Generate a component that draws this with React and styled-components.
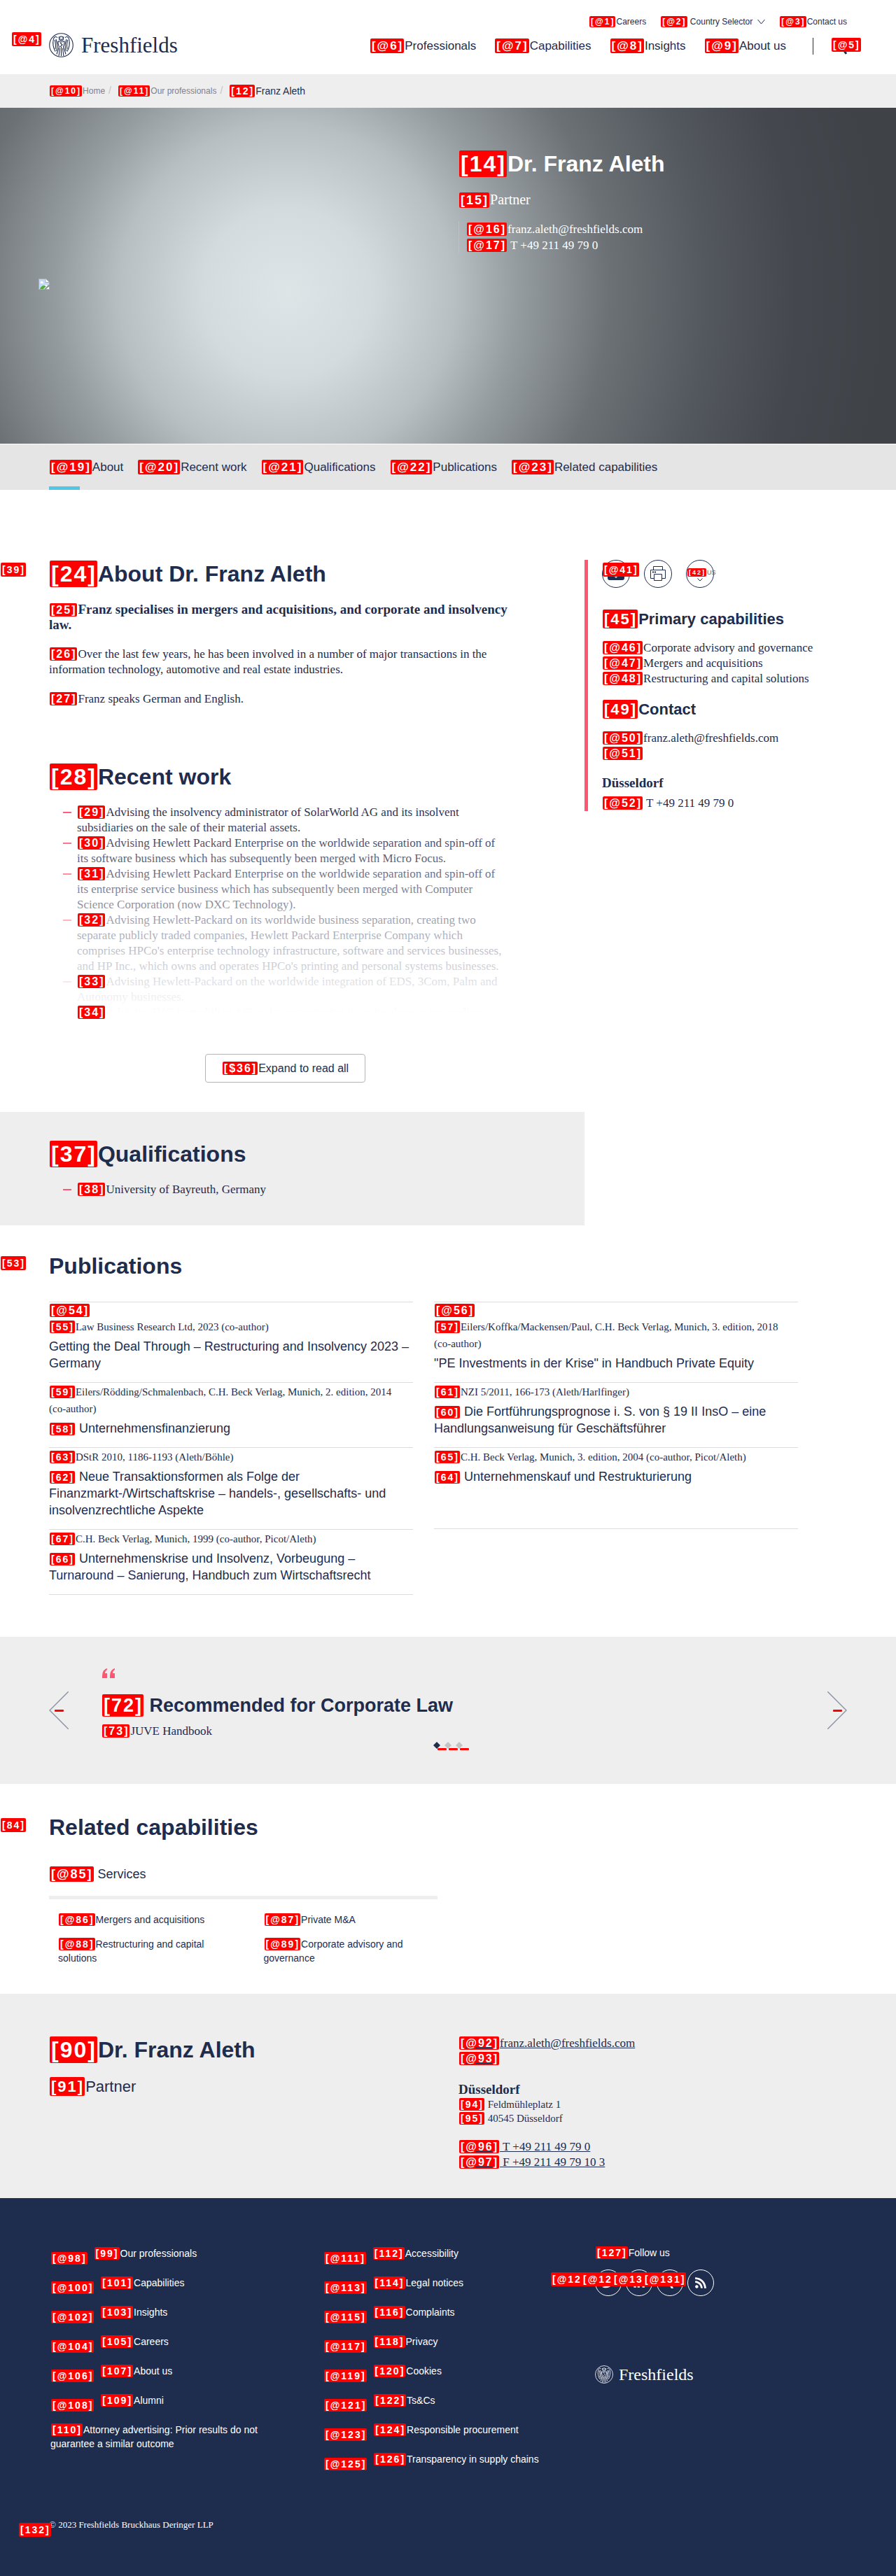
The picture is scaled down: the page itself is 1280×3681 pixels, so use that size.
import React from "react";
import styled, { createGlobalStyle } from "styled-components";
import { FaTwitter, FaLinkedinIn, FaXing, FaRss } from "react-icons/fa";

const navy = "#1e2c4d";
const pink = "#ff5773";
const pale = "#eeeeee";
const sans = `"Helvetica Neue", "Liberation Sans", Arial, sans-serif`;
const serif = `"Liberation Serif", "Times New Roman", serif`;

const GlobalStyle = createGlobalStyle`
  *, *::before, *::after { box-sizing: border-box; }
  body { margin: 0; background: #fff; color: ${navy}; font-family: ${sans}; font-size: 16px; }
  h1, h2, h3, p, ul { margin: 0; padding: 0; }
  ul { list-style: none; }
  a { color: inherit; text-decoration: none; }
  button { font: inherit; color: inherit; background: none; border: 0; padding: 0; cursor: pointer; }
`;

const Tag = styled.span`
  position: relative;
  z-index: 2;
  margin: 0 1px;
  padding: 1px 1px 1px 2px;
  border-radius: 2px;
  background: #ff0000;
  color: #fff;
  font-family: ${sans};
  font-weight: 700;
  font-size: ${(p) => p.$s || 16}px;
  line-height: 1;
  letter-spacing: 2px;
  white-space: nowrap;
`;

const FloatTag = styled(Tag)`
  position: absolute;
  left: ${(p) => p.$x}px;
  top: ${(p) => p.$y}px;
  margin: 0;
  line-height: 18px;
`;

const RedDash = styled.span`
  position: absolute;
  left: ${(p) => p.$x}px;
  top: ${(p) => p.$y}px;
  width: 13px;
  height: 3px;
  border-radius: 1px;
  background: #ff0000;
`;

/* ---------- header ---------- */
const Header = styled.header`
  display: flex;
  justify-content: space-between;
  padding: 22px 70px 24px;
`;
const LogoLink = styled.a`
  position: relative;
  display: flex;
  align-items: center;
  gap: ${(p) => (p.$small ? 8 : 11)}px;
  margin-top: ${(p) => (p.$small ? 99 : 24)}px;
  height: ${(p) => (p.$small ? 26 : 36)}px;
  font-family: ${serif};
  font-size: ${(p) => (p.$small ? 24 : 31)}px;
  line-height: 1;
`;
const HeaderRight = styled.div`
  display: flex;
  flex-direction: column;
  align-items: flex-end;
  gap: 14px;
`;
const TopLinks = styled.nav`
  display: flex;
  gap: 20px;
  font-size: 12px;
  line-height: 18px;
`;
const Chevron = styled.svg`
  margin-left: 7px;
`;
const MainNav = styled.nav`
  display: flex;
  align-items: center;
  gap: 26px;
  font-size: 17px;
  line-height: 22px;
`;
const SearchButton = styled.button`
  position: relative;
  display: flex;
  height: 24px;
  margin-left: 12px;
  padding-left: 26px;
  border-left: 1px solid ${navy};
`;

const Crumbs = styled.nav`
  display: flex;
  align-items: center;
  padding: 0 70px;
  background: ${pale};
  font-size: 12px;
  line-height: 47px;
`;
const CrumbLink = styled.a`
  color: #7b8290;
  &::after {
    content: "/";
    margin: 0 9px 0 5px;
    color: #c4c4c8;
    font-size: 14px;
  }
`;
const CrumbHere = styled.span`
  font-size: 14px;
`;

/* ---------- hero ---------- */
const Hero = styled.section`
  display: grid;
  grid-template-columns: 600px 1fr;
  min-height: 480px;
  padding-left: 55px;
  color: #fff;
  background: radial-gradient(
    circle at 410px 55%,
    #dde5e7 0,
    #d3dbde 120px,
    #b7bfc2 240px,
    #959c9f 330px,
    #7f8588 400px,
    #6c7176 460px,
    #53585e 600px,
    #44484e 730px,
    #3f4348 860px
  );
`;
const Portrait = styled.div`
  padding-top: 244px;
`;
const HeroText = styled.div`
  padding-top: 60px;
`;
const HeroRole = styled.p`
  margin: 17px 0;
  font-family: ${serif};
  font-size: 20px;
  line-height: 28px;
`;
const HeroContact = styled.ul`
  padding-left: 10px;
  border-left: 1px solid #f5c518;
  font-family: ${serif};
  font-size: 17px;
  line-height: 23px;
`;

const Tabs = styled.nav`
  display: flex;
  gap: 20px;
  margin-top: 1px;
  padding: 0 70px;
  background: #e5e5e5;
  font-size: 17px;
  line-height: 65px;
`;
const Tab = styled.a`
  position: relative;
  ${(p) =>
    p.$active &&
    `&::after {
      content: "";
      position: absolute;
      left: 0;
      bottom: 0;
      width: 44px;
      height: 5px;
      background: #53c6e6;
    }`}
`;

/* ---------- shared text ---------- */
const H2 = styled.h2`
  font-size: 32px;
  line-height: 40px;
`;
const Copy = styled.p`
  margin-top: 20px;
  font-family: ${serif};
  font-size: ${(p) => (p.$strong ? 19 : 17)}px;
  font-weight: ${(p) => (p.$strong ? 700 : 400)};
  line-height: 22px;
`;
const DashList = styled.ul`
  position: relative;
  margin-top: 20px;
  padding-left: 40px;
  font-family: ${serif};
  font-size: 17px;
  line-height: 22px;
  ${(p) =>
    p.$fade &&
    `&::after {
      content: "";
      position: absolute;
      z-index: 1;
      inset: 0;
      background: linear-gradient(rgba(255,255,255,0) 0, #fff 298px);
    }`}
`;
const DashItem = styled.li`
  position: relative;
  &::before {
    content: "";
    position: absolute;
    left: -20px;
    top: 10px;
    width: 12px;
    height: 2px;
    background: ${pink};
  }
`;

/* ---------- main ---------- */
const Main = styled.div`
  position: relative;
  display: grid;
  grid-template-columns: 835px 1fr;
  align-items: start;
  padding-top: 100px;
`;
const Block = styled.section`
  padding: 0 90px ${(p) => p.$bottom}px 70px;
`;
const Qualifications = styled.section`
  padding: 40px 90px 40px 70px;
  background: ${pale};
`;
const ExpandButton = styled.button`
  display: block;
  height: 41px;
  margin: 48px auto 0;
  padding: 0 23px;
  border: 1px solid #b5b5b5;
  border-radius: 4px;
  line-height: 38px;
`;
const Aside = styled.aside`
  padding-left: 20px;
  border-left: 5px solid ${pink};
  font-family: ${serif};
  font-size: 17px;
  line-height: 22px;
`;
const Tools = styled.div`
  display: flex;
  gap: 20px;
  margin-bottom: 31px;
`;
const ToolButton = styled.button`
  position: relative;
  display: flex;
  align-items: center;
  justify-content: center;
  width: 40px;
  height: 40px;
  border: 1px solid ${navy};
  border-radius: 50%;
`;
const LocaleText = styled.span`
  position: absolute;
  left: 0;
  top: 11px;
  color: #5d6780;
  font-family: ${sans};
  font-size: 9px;
  line-height: 12px;
  white-space: nowrap;
`;
const LocaleChevron = styled.svg`
  position: absolute;
  left: 15px;
  bottom: 8px;
`;
const H3 = styled.h3`
  margin-bottom: 16px;
  font-family: ${sans};
  font-size: 22px;
  line-height: 28px;
`;
const AsideList = styled.ul`
  margin-bottom: ${(p) => p.$gap}px;
`;
const Bold = styled.p`
  font-size: 19px;
  font-weight: 700;
  line-height: 22px;
`;
const AsidePhone = styled.a`
  display: block;
  margin-top: 7px;
`;

/* ---------- publications ---------- */
const Section = styled.section`
  position: relative;
  padding: ${(p) => p.$top}px 70px ${(p) => p.$bottom}px;
`;
const PubGrid = styled.div`
  display: grid;
  grid-template-columns: 1fr 1fr;
  column-gap: 30px;
  max-width: 1070px;
  margin-top: 31px;
`;
const Pub = styled.article`
  padding: 1px 0 15px;
  border-top: 1px solid #dcdcdf;
  ${(p) => p.$last && `border-bottom: 1px solid #dcdcdf;`}
`;
const PubLink = styled.a`
  display: block;
  line-height: 22px;
`;
const PubMeta = styled.p`
  font-family: ${serif};
  font-size: 15px;
  line-height: 24px;
`;
const PubTitle = styled.p`
  margin-top: 4px;
  font-size: 18px;
  line-height: 24px;
`;

/* ---------- quote ---------- */
const Quote = styled.section`
  display: flex;
  flex-direction: column;
  padding: 45px 70px 50px;
  background: ${pale};
`;
const QuoteRow = styled.div`
  display: flex;
  align-items: flex-start;
`;
const Arrow = styled.button`
  position: relative;
  width: 28px;
  height: 54px;
  margin-top: 33px;
`;
const QuoteBody = styled.blockquote`
  flex: 1;
  margin: 0 0 0 47px;
`;
const QuoteTitle = styled.h3`
  margin-top: 18px;
  font-size: 27px;
  line-height: 40px;
`;
const QuoteSource = styled.p`
  margin-top: 6px;
  font-family: ${serif};
  font-size: 17px;
  line-height: 22px;
`;
const Dots = styled.div`
  display: flex;
  justify-content: center;
  gap: 6px;
  margin-top: 4px;
`;
const Dot = styled.button`
  position: relative;
  width: 10px;
  height: 10px;
  display: flex;
`;

/* ---------- related ---------- */
const Services = styled.div`
  max-width: 555px;
  margin-top: 35px;
`;
const ServicesLink = styled.a`
  display: block;
  padding-bottom: 19px;
  border-bottom: 5px solid ${pale};
  font-size: 18px;
  line-height: 24px;
`;
const ServiceGrid = styled.ul`
  display: grid;
  grid-template-columns: 1fr 1fr;
  gap: 15px 45px;
  padding: 19px 0 0 13px;
  font-size: 14px;
  line-height: 20px;
`;

/* ---------- contact band ---------- */
const ContactBand = styled.section`
  display: grid;
  grid-template-columns: 585px 1fr;
  padding: 60px 70px 40px;
  background: ${pale};
`;
const BandRole = styled.p`
  margin-top: 19px;
  font-size: 22px;
  line-height: 28px;
`;
const BandDetails = styled.div`
  font-family: ${serif};
  font-size: 17px;
  line-height: 22px;
`;
const BandLink = styled.a`
  display: block;
  text-decoration: underline;
`;
const Address = styled.address`
  margin-bottom: 20px;
  font-style: normal;
  font-size: 15px;
  line-height: 20px;
`;
const City = styled(Bold)`
  margin-top: 22px;
`;

/* ---------- footer ---------- */
const Footer = styled.footer`
  position: relative;
  padding: 69px 70px 63px;
  background: ${navy};
  color: #fff;
  font-size: 14px;
`;
const FooterCols = styled.div`
  display: grid;
  grid-template-columns: 390px 390px 1fr;
`;
const FooterList = styled.ul`
  padding-left: 2px;
`;
const FooterItem = styled.li`
  height: 42px;
  line-height: 20px;
`;
const LowTag = styled(Tag)`
  top: 7px;
  margin-right: 9px;
`;
const Legal = styled.p`
  max-width: 330px;
  line-height: 20px;
`;
const FooterFollow = styled.div`
  line-height: 18px;
`;
const Social = styled.div`
  display: flex;
  gap: 6px;
  margin-top: 15px;
`;
const SocialLink = styled.a`
  position: relative;
  display: flex;
  align-items: center;
  justify-content: center;
  width: 38px;
  height: 38px;
  border: 1px solid #fff;
  border-radius: 50%;
  font-size: 18px;
`;
const Copyright = styled.p`
  position: relative;
  margin-top: 52px;
  font-family: ${serif};
  font-size: 13px;
  line-height: 20px;
`;

function Emblem({ size, bg }) {
  return (
    <svg width={size} height={size} viewBox="0 0 35 35" fill="none" stroke="currentColor" strokeWidth="1.1" aria-hidden="true">
      <circle cx="17.5" cy="17.5" r="16.8" />
      <path d="M12 7c-2-2.600-5-1.500-5.600 2C5 15 6 21 9 26.500M23 7c2-2.600 5-1.500 5.600 2C30 15 29 21 26 26.500" />
      <path d="M10 9c2 6 2.500 12 .5 17M8.300 10c1.300 5 1.600 9 .7 13M25 9c-2 6-2.500 12-.5 17M26.700 10c-1.300 5-1.600 9-.7 13" />
      <circle cx="17.500" cy="8" r="3" fill={bg} />
      <path d="M14 5.500l1 3M21 5.500l-1 3M16.300 7.500h.6M18.300 7.500h.6M16.500 9.500h2" />
      <path d="M13 11.500c1.500 2 7.500 2 9 0M13 12c-.5 4 .8 6 1.500 8-1.500 4-2.500 7-3.500 10.500M22 12c.5 4-.8 6-1.500 8 1.500 4 2.500 7 3.500 10.500" />
      <path d="M16 14l3 3-3 3M17.500 20v13M15.500 22c-.5 4-.8 7-1.500 11M19.500 22c.5 4 .8 7 1.500 11" />
    </svg>
  );
}

const tabs = [
  ["19", "About"],
  ["20", "Recent work"],
  ["21", "Qualifications"],
  ["22", "Publications"],
  ["23", "Related capabilities"],
];

const work = [
  ["29", "Advising the insolvency administrator of SolarWorld AG and its insolvent", "subsidiaries on the sale of their material assets."],
  ["30", "Advising Hewlett Packard Enterprise on the worldwide separation and spin-off of", "its software business which has subsequently been merged with Micro Focus."],
  ["31", "Advising Hewlett Packard Enterprise on the worldwide separation and spin-off of", "its enterprise service business which has subsequently been merged with Computer", "Science Corporation (now DXC Technology)."],
  ["32", "Advising Hewlett-Packard on its worldwide business separation, creating two", "separate publicly traded companies, Hewlett Packard Enterprise Company which", "comprises HPCo's enterprise technology infrastructure, software and services businesses,", "and HP Inc., which owns and operates HPCo's printing and personal systems businesses."],
  ["33", "Advising Hewlett-Packard on the worldwide integration of EDS, 3Com, Palm and", "Autonomy businesses."],
  ["34", "Advising IVG Immobilien AG on its restructuring in an insolvency proceeding"],
];

const pubs = [
  { link: "54", m: "55", meta: "Law Business Research Ltd, 2023 (co-author)", title: "Getting the Deal Through – Restructuring and Insolvency 2023 – Germany" },
  { link: "56", m: "57", meta: ["Eilers/Koffka/Mackensen/Paul, C.H. Beck Verlag, Munich, 3. edition, 2018", "(co-author)"], title: "\"PE Investments in der Krise\" in Handbuch Private Equity" },
  { m: "59", meta: ["Eilers/Rödding/Schmalenbach, C.H. Beck Verlag, Munich, 2. edition, 2014", "(co-author)"], t: "58", title: "Unternehmensfinanzierung" },
  { m: "61", meta: "NZI 5/2011, 166-173 (Aleth/Harlfinger)", t: "60", title: "Die Fortführungsprognose i. S. von § 19 II InsO – eine Handlungsanweisung für Geschäftsführer" },
  { m: "63", meta: "DStR 2010, 1186-1193 (Aleth/Böhle)", t: "62", title: "Neue Transaktionsformen als Folge der Finanzmarkt-/Wirtschaftskrise – handels-, gesellschafts- und insolvenzrechtliche Aspekte" },
  { m: "65", meta: "C.H. Beck Verlag, Munich, 3. edition, 2004 (co-author, Picot/Aleth)", t: "64", title: "Unternehmenskauf und Restrukturierung", last: true },
  { m: "67", meta: "C.H. Beck Verlag, Munich, 1999 (co-author, Picot/Aleth)", t: "66", title: "Unternehmenskrise und Insolvenz, Vorbeugung – Turnaround – Sanierung, Handbuch zum Wirtschaftsrecht", last: true },
];

const services = [
  ["86", "Mergers and acquisitions"],
  ["87", "Private M&A"],
  ["88", "Restructuring and capital solutions"],
  ["89", "Corporate advisory and governance"],
];

const footerA = [
  ["98", "99", "Our professionals"],
  ["100", "101", "Capabilities"],
  ["102", "103", "Insights"],
  ["104", "105", "Careers"],
  ["106", "107", "About us"],
  ["108", "109", "Alumni"],
];
const footerB = [
  ["111", "112", "Accessibility"],
  ["113", "114", "Legal notices"],
  ["115", "116", "Complaints"],
  ["117", "118", "Privacy"],
  ["119", "120", "Cookies"],
  ["121", "122", "Ts&Cs"],
  ["123", "124", "Responsible procurement"],
  ["125", "126", "Transparency in supply chains"],
];
const social = [
  ["128", "Twitter", FaTwitter],
  ["129", "LinkedIn", FaLinkedinIn],
  ["130", "Xing", FaXing],
  ["131", "RSS", FaRss],
];

function Lines({ of }) {
  return [].concat(of).map((line, i) => (
    <React.Fragment key={i}>
      {i > 0 && <br />}
      {line}
    </React.Fragment>
  ));
}

function FooterLinks({ items }) {
  return items.map(([a, b, label]) => (
    <FooterItem key={a}>
      <a href="#">
        <LowTag $s={14}>[@{a}]</LowTag>
        <Tag $s={14}>[{b}]</Tag>
        {label}
      </a>
    </FooterItem>
  ));
}

export default function App() {
  return (
    <>
      <GlobalStyle />
      <Header>
        <LogoLink href="#">
          <FloatTag $s={14} $x={-53} $y={0}>[@4]</FloatTag>
          <Emblem size={35} bg="#fff" />
          Freshfields
        </LogoLink>
        <HeaderRight>
          <TopLinks>
            <a href="#"><Tag $s={12}>[@1]</Tag>Careers</a>
            <a href="#">
              <Tag $s={12}>[@2]</Tag> Country Selector
              <Chevron width="11" height="8" viewBox="0 0 11 8" fill="none" stroke={navy}>
                <path d="M0.500 1l5 6 5-6" />
              </Chevron>
            </a>
            <a href="#"><Tag $s={12}>[@3]</Tag>Contact us</a>
          </TopLinks>
          <MainNav>
            <a href="#"><Tag $s={17}>[@6]</Tag>Professionals</a>
            <a href="#"><Tag $s={17}>[@7]</Tag>Capabilities</a>
            <a href="#"><Tag $s={17}>[@8]</Tag>Insights</a>
            <a href="#"><Tag $s={17}>[@9]</Tag>About us</a>
            <SearchButton aria-label="Search">
              <svg width="22" height="24" viewBox="0 0 22 24" fill="none" stroke={navy} strokeWidth="2">
                <circle cx="10" cy="10" r="9" />
                <path d="M16 16l5 7" strokeWidth="3" />
              </svg>
              <FloatTag $s={14} $x={26} $y={0}>[@5]</FloatTag>
            </SearchButton>
          </MainNav>
        </HeaderRight>
      </Header>

      <Crumbs>
        <CrumbLink href="#"><Tag $s={12}>[@10]</Tag>Home</CrumbLink>
        <CrumbLink href="#"><Tag $s={12}>[@11]</Tag>Our professionals</CrumbLink>
        <CrumbHere><Tag $s={14}>[12]</Tag>Franz Aleth</CrumbHere>
      </Crumbs>

      <Hero>
        <Portrait>
          <svg width="16" height="16" viewBox="0 0 16 16" role="img" aria-label="Portrait">
            <path d="M0.500 0.500h10l5 5v10h-15z" fill="#fff" stroke="#a9adb2" />
            <path d="M1 1h9v5h5v4L10 9 4 15H1z" fill="#c3d9f5" />
            <path d="M3 6a1.500 1.500 0 0 1 3-1 1.300 1.300 0 0 1 1 2H3z" fill="#fff" />
            <path d="M2 15c1-3 3-5 6-5l3 1-4 4zM12 11l3-2v3z" fill="#4fae3e" />
            <path d="M10 0.500v5h5.500" fill="#fff" stroke="#a9adb2" />
            <path d="M9 15.500l6.500-6" stroke="#8f9599" strokeWidth="2" />
          </svg>
        </Portrait>
        <HeroText>
          <H2 as="h1"><Tag $s={32}>[14]</Tag>Dr. Franz Aleth</H2>
          <HeroRole><Tag $s={18}>[15]</Tag>Partner</HeroRole>
          <HeroContact>
            <li><a href="#"><Tag>[@16]</Tag>franz.aleth@freshfields.com</a></li>
            <li><a href="#"><Tag>[@17]</Tag> T +49 211 49 79 0</a></li>
          </HeroContact>
        </HeroText>
      </Hero>

      <Tabs>
        {tabs.map(([n, label], i) => (
          <Tab href="#" key={n} $active={i === 0}><Tag $s={17}>[@{n}]</Tag>{label}</Tab>
        ))}
      </Tabs>

      <Main>
        <FloatTag $s={14} $x={1} $y={104}>[39]</FloatTag>
        <main>
          <Block $bottom={80}>
            <H2><Tag $s={32}>[24]</Tag>About Dr. Franz Aleth</H2>
            <Copy $strong>
              <Tag>[25]</Tag>Franz specialises in mergers and acquisitions, and corporate and insolvency
              <br />
              law.
            </Copy>
            <Copy>
              <Tag>[26]</Tag>Over the last few years, he has been involved in a number of major transactions in the
              <br />
              information technology, automotive and real estate industries.
            </Copy>
            <Copy><Tag>[27]</Tag>Franz speaks German and English.</Copy>
          </Block>
          <Block $bottom={42}>
            <H2><Tag $s={32}>[28]</Tag>Recent work</H2>
            <DashList $fade>
              {work.map(([n, ...lines]) => (
                <DashItem key={n}><Tag>[{n}]</Tag><Lines of={lines} /></DashItem>
              ))}
            </DashList>
            <ExpandButton><Tag>[$36]</Tag>Expand to read all</ExpandButton>
          </Block>
          <Qualifications>
            <H2><Tag $s={32}>[37]</Tag>Qualifications</H2>
            <DashList>
              <DashItem><Tag>[38]</Tag>University of Bayreuth, Germany</DashItem>
            </DashList>
          </Qualifications>
        </main>
        <Aside>
          <Tools>
            <ToolButton aria-label="Download">
              <svg width="26" height="22" viewBox="0 0 26 22" fill={navy}>
                <path d="M1 10h24v7q0 3-3 3H4q-3 0-3-3z" />
                <path d="M9 13h8l-4 4z" fill="#fff" />
              </svg>
              <FloatTag $s={14} $x={0} $y={3}>[@41]</FloatTag>
            </ToolButton>
            <ToolButton aria-label="Print">
              <svg width="22" height="22" viewBox="0 0 22 22" fill="#fff" stroke={navy}>
                <path d="M4.500 5.500v-5h13v5" />
                <path d="M5 17.500H0.500v-12h21v12H17" />
                <path d="M5.500 11.500h11v9h-11z" />
                <path d="M3 8.500h2M6 8.500h2" strokeWidth="2" />
              </svg>
            </ToolButton>
            <ToolButton aria-label="Change language">
              <LocaleText><Tag $s={9}>[42]</Tag>US</LocaleText>
              <LocaleChevron width="8" height="5" viewBox="0 0 8 5" fill="none" stroke={navy}>
                <path d="M0.500 0.500l3.500 3.500 3.500-3.500" />
              </LocaleChevron>
            </ToolButton>
          </Tools>
          <H3><Tag $s={22}>[45]</Tag>Primary capabilities</H3>
          <AsideList $gap={19}>
            <li><a href="#"><Tag>[@46]</Tag>Corporate advisory and governance</a></li>
            <li><a href="#"><Tag>[@47]</Tag>Mergers and acquisitions</a></li>
            <li><a href="#"><Tag>[@48]</Tag>Restructuring and capital solutions</a></li>
          </AsideList>
          <H3><Tag $s={22}>[49]</Tag>Contact</H3>
          <AsideList $gap={20}>
            <li><a href="#"><Tag>[@50]</Tag>franz.aleth@freshfields.com</a></li>
            <li><a href="#"><Tag>[@51]</Tag></a></li>
          </AsideList>
          <Bold>Düsseldorf</Bold>
          <AsidePhone href="#"><Tag>[@52]</Tag> T +49 211 49 79 0</AsidePhone>
        </Aside>
      </Main>

      <Section $top={38} $bottom={60}>
        <FloatTag $s={14} $x={1} $y={44}>[53]</FloatTag>
        <H2>Publications</H2>
        <PubGrid>
          {pubs.map((p) => (
            <Pub key={p.m} $last={p.last}>
              {p.link && <PubLink href="#"><Tag>[@{p.link}]</Tag></PubLink>}
              <PubMeta><Tag $s={14}>[{p.m}]</Tag><Lines of={p.meta} /></PubMeta>
              <PubTitle>{p.t && <><Tag $s={14}>[{p.t}]</Tag> </>}{p.title}</PubTitle>
            </Pub>
          ))}
        </PubGrid>
      </Section>

      <Quote>
        <QuoteRow>
          <Arrow aria-label="Previous">
            <svg width="28" height="54" viewBox="0 0 28 54" fill="none" stroke="#8e95a5" strokeWidth="1.5">
              <path d="M28 0L1 27l27 27" />
            </svg>
            <RedDash $x={8} $y={26} />
          </Arrow>
          <QuoteBody>
            <svg width="21" height="15" viewBox="0 0 21 15" fill={pink} aria-hidden="true" display="block">
              <path d="M8 0C2 2 1 6 1 14h7V7H5c0-2 1-4 3-5zM19 0c-6 2-7 6-7 14h7V7h-3c0-2 1-4 3-5z" />
            </svg>
            <QuoteTitle><Tag $s={27}>[72]</Tag> Recommended for Corporate Law</QuoteTitle>
            <QuoteSource><Tag>[73]</Tag>JUVE Handbook</QuoteSource>
          </QuoteBody>
          <Arrow aria-label="Next">
            <svg width="28" height="54" viewBox="0 0 28 54" fill="none" stroke="#8e95a5" strokeWidth="1.5">
              <path d="M0 0l27 27L0 54" />
            </svg>
            <RedDash $x={8} $y={26} />
          </Arrow>
        </QuoteRow>
        <Dots>
          {[navy, "#c4c4c4", "#c4c4c4"].map((fill, i) => (
            <Dot key={i} aria-label={`Slide ${i + 1}`}>
              <svg width="10" height="10" viewBox="0 0 10 10"><path d="M5 0l5 5-5 5-5-5z" fill={fill} /></svg>
              <RedDash $x={6} $y={9} />
            </Dot>
          ))}
        </Dots>
      </Quote>

      <Section $top={42} $bottom={41}>
        <FloatTag $s={14} $x={1} $y={49}>[84]</FloatTag>
        <H2>Related capabilities</H2>
        <Services>
          <ServicesLink href="#"><Tag $s={18}>[@85]</Tag> Services</ServicesLink>
          <ServiceGrid>
            {services.map(([n, label]) => (
              <li key={n}><a href="#"><Tag $s={14}>[@{n}]</Tag>{label}</a></li>
            ))}
          </ServiceGrid>
        </Services>
      </Section>

      <ContactBand>
        <div>
          <H2><Tag $s={32}>[90]</Tag>Dr. Franz Aleth</H2>
          <BandRole><Tag $s={22}>[91]</Tag>Partner</BandRole>
        </div>
        <BandDetails>
          <BandLink href="#"><Tag>[@92]</Tag>franz.aleth@freshfields.com</BandLink>
          <BandLink href="#"><Tag>[@93]</Tag></BandLink>
          <City>Düsseldorf</City>
          <Address>
            <Tag $s={14}>[94]</Tag> Feldmühleplatz 1
            <br />
            <Tag $s={14}>[95]</Tag> 40545 Düsseldorf
          </Address>
          <BandLink href="#"><Tag>[@96]</Tag> T +49 211 49 79 0</BandLink>
          <BandLink href="#"><Tag>[@97]</Tag> F +49 211 49 79 10 3</BandLink>
        </BandDetails>
      </ContactBand>

      <Footer>
        <FooterCols>
          <FooterList>
            <FooterLinks items={footerA} />
            <li><Legal><Tag $s={14}>[110]</Tag>Attorney advertising: Prior results do not guarantee a similar outcome</Legal></li>
          </FooterList>
          <FooterList>
            <FooterLinks items={footerB} />
          </FooterList>
          <FooterFollow>
            <Tag $s={14}>[127]</Tag>Follow us
            <Social>
              {social.map(([n, label, Icon]) => (
                <SocialLink href="#" key={n} aria-label={label}>
                  <Icon />
                  <FloatTag $s={14} $x={-64} $y={3}>[@{n}]</FloatTag>
                </SocialLink>
              ))}
            </Social>
            <LogoLink href="#" $small>
              <Emblem size={26} bg={navy} />
              Freshfields
            </LogoLink>
          </FooterFollow>
        </FooterCols>
        <Copyright>
          <FloatTag $s={14} $x={-43} $y={7}>[132]</FloatTag>
          © 2023 Freshfields Bruckhaus Deringer LLP
        </Copyright>
      </Footer>
    </>
  );
}
